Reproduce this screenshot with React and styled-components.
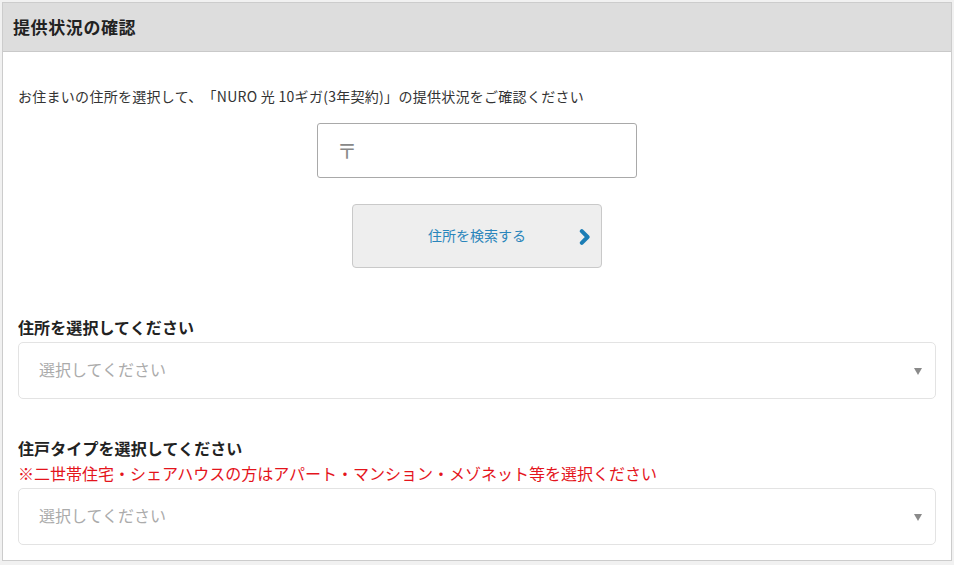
import React from "react";
import styled, { createGlobalStyle } from "styled-components";

const Global = createGlobalStyle`
  html, body { margin: 0; padding: 0; background: #f1f1f1; }
  body {
    font-family: "Noto Sans CJK JP", "Noto Sans", sans-serif;
    color: #333;
    text-spacing-trim: space-all;
  }
  #root { padding: 2px 2px 0 2px; }
`;

const Panel = styled.section`
  width: 950px;
  box-sizing: border-box;
  border: 1px solid #cccccc;
  background: #fff;
`;

const Header = styled.header`
  height: 49px;
  box-sizing: border-box;
  background: #dddddd;
  border-bottom: 1px solid #c9c9c9;
  display: flex;
  align-items: center;
  padding: 0 0 2px 10px;
  font-size: 17px;
  font-weight: 700;
  color: #222;
  letter-spacing: 0.6px;
`;

const Body = styled.div`
  padding: 34px 15px 15px 15px;
  display: flex;
  flex-direction: column;
`;

const Lead = styled.p`
  margin: 0;
  font-size: 14px;
  line-height: 20px;
  color: #333;
  letter-spacing: 0.28px;
`;

const Center = styled.div`
  display: flex;
  justify-content: center;
  margin-top: ${(p) => p.$top}px;
`;

const ZipBox = styled.div`
  width: 320px;
  height: 55px;
  box-sizing: border-box;
  border: 1px solid #a9a9a9;
  border-radius: 3px;
  display: flex;
  align-items: center;
  padding-left: 19px;
  font-size: 20px;
  color: #888;
`;

const SearchButton = styled.button`
  width: 250px;
  height: 64px;
  box-sizing: border-box;
  margin: 0;
  background: #eeeeee;
  border: 1px solid #c9c9c9;
  border-radius: 4px;
  display: flex;
  align-items: center;
  justify-content: center;
  position: relative;
  font-family: inherit;
  font-size: 14px;
  color: #2a85bb;
  padding: 0 0 2px 0;
  cursor: pointer;
`;

const Chevron = styled.svg`
  position: absolute;
  right: 10px;
  top: 24px;
`;

const Label = styled.h3`
  margin: ${(p) => p.$top}px 0 0 0;
  font-size: 16px;
  line-height: 22px;
  font-weight: 700;
  color: #222;
  letter-spacing: 0.1px;
`;

const Note = styled.p`
  margin: 3px 0 0 0;
  font-size: 16px;
  line-height: 22px;
  color: #e4141c;
  letter-spacing: 0;
`;

const Select = styled.div`
  margin-top: 4px;
  height: 57px;
  box-sizing: border-box;
  border: 1px solid #e3e3e3;
  border-radius: 5px;
  display: flex;
  align-items: center;
  justify-content: space-between;
  padding: 0 13px 4px 20px;
  font-size: 16px;
  color: #ababab;
`;

const Arrow = styled.span`
  width: 0;
  height: 0;
  border-left: 4.5px solid transparent;
  border-right: 4.5px solid transparent;
  border-top: 7px solid #8a8a8a;
  margin-top: 5px;
`;

export default function App() {
  return (
    <>
      <Global />
      <Panel>
        <Header>提供状況の確認</Header>
        <Body>
          <Lead>お住まいの住所を選択して、「NURO 光 10ギガ(3年契約)」の提供状況をご確認ください</Lead>
          <Center $top={17}>
            <ZipBox>〒</ZipBox>
          </Center>
          <Center $top={26}>
            <SearchButton>
              住所を検索する
              <Chevron width="12" height="16" viewBox="0 0 12 16">
                <path d="M2.8 2.2 L8.6 8 L2.8 13.8" fill="none" stroke="#1b7db5" strokeWidth="4" strokeLinejoin="round" strokeLinecap="round" />
              </Chevron>
            </SearchButton>
          </Center>
          <Label $top={48}>住所を選択してください</Label>
          <Select>
            選択してください
            <Arrow />
          </Select>
          <Label $top={38}>住戸タイプを選択してください</Label>
          <Note>※二世帯住宅・シェアハウスの方はアパート・マンション・メゾネット等を選択ください</Note>
          <Select>
            選択してください
            <Arrow />
          </Select>
        </Body>
      </Panel>
    </>
  );
}
